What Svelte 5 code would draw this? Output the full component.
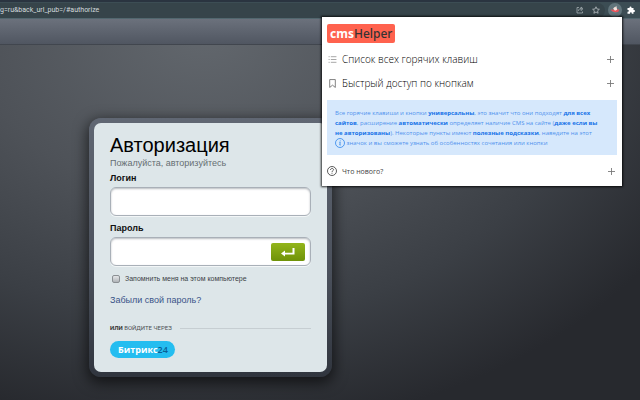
<script lang="ts">
  let login = $state('');
  let password = $state('');
  let remember = $state(false);
</script>

<div class="browser">
  <div class="toolbar">
    <div class="address">
      <span class="url">g=ru&amp;back_url_pub=/#authorize</span>
      <button class="tool" aria-label="Поделиться">
        <svg viewBox="0 0 16 16" fill="none" stroke="#aab2b6" stroke-width="1.500">
          <path d="M6 3H2v11h11v-3M5 10c0-4 3-5 6-5M10 2l4 3.500-4 3.500z" />
        </svg>
      </button>
      <button class="tool" aria-label="Добавить в закладки">
        <svg viewBox="0 0 16 16" fill="none" stroke="#b7bec2" stroke-width="1.600">
          <path d="M8 1.500l2 4.500 4.800.5-3.600 3.200 1 4.800L8 12l-4.200 2.500 1-4.800L1.200 6.500 6 6z" />
        </svg>
      </button>
    </div>
    <button class="tool round" aria-label="cmsHelper">
      <svg viewBox="0 0 16 16">
        <path d="M2 9c3 4 9 5 12 0l-3 .5H4z" fill="#2f9aa3" />
        <path d="M1 7l5 .5L9 6l6 1.500-2 3.500-5 1-5-2z" fill="#e8545c" />
        <path d="M5 6l2-3 1 1 2-3 1.500 6.500L8 9z" fill="#f6e3dd" />
      </svg>
    </button>
    <button class="tool" aria-label="Расширения">
      <svg viewBox="0 0 16 16" fill="#fff">
        <path d="M1 4h4V3a2 2 0 0 1 4 0v1h4v4h1a2 2 0 0 1 0 4h-1v3.500H9.500V14a1.700 1.700 0 0 0-3.400 0v1.500H1v-4h1a1.800 1.800 0 0 0 0-3.600H1z" />
      </svg>
    </button>
  </div>

  <aside class="popup">
    <div class="logo"><b>cms</b>Helper</div>

    <button class="item">
      <svg viewBox="0 0 16 16" fill="none" stroke="#888" stroke-width="1.300">
        <path d="M5 3h10M5 8h10M5 13h10M1 3h2M1 8h2M1 13h2" />
      </svg>
      <span>Список всех горячих клавиш</span>
      <svg class="plus" viewBox="0 0 8 8" fill="none" stroke="#777"><path d="M4 0v8M0 4h8" /></svg>
    </button>
    <button class="item">
      <svg viewBox="0 0 16 16" fill="none" stroke="#555" stroke-width="1.300">
        <path d="M3 1h10v14l-5-4-5 4z" />
      </svg>
      <span>Быстрый доступ по кнопкам</span>
      <svg class="plus" viewBox="0 0 8 8" fill="none" stroke="#777"><path d="M4 0v8M0 4h8" /></svg>
    </button>

    <p class="note">
      Все горячие клавиши и кнопки <b>универсальны</b>, это значит что они подходят <b>для всех</b><br />
      <b>сайтов</b>, расширение <b>автоматически</b> определяет наличие CMS на сайте (<b>даже если вы</b><br />
      <b>не авторизованы</b>). Некоторые пункты имеют <b>полезные подсказки</b>, наведите на этот<br />
      <svg viewBox="0 0 20 20" fill="none" stroke="#2f86ec" stroke-width="1.600">
        <circle cx="10" cy="10" r="9" />
        <path d="M8.500 8.500h2l-1 5.500h2M10.700 5v1.500" />
      </svg>
      значок и вы сможете узнать об особенностях сочетания или кнопки
    </p>

    <button class="item small">
      <svg viewBox="0 0 20 20" fill="none" stroke="#333" stroke-width="1.600">
        <circle cx="10" cy="10" r="9" />
        <path d="M7 8c0-4 6-4 6-.5 0 2-3 2-3 4.500M10 13.500v2" />
      </svg>
      <span>Что нового?</span>
      <svg class="plus" viewBox="0 0 8 8" fill="none" stroke="#777"><path d="M4 0v8M0 4h8" /></svg>
    </button>
  </aside>

  <div class="band"></div>

  <main>
    <form class="card" onsubmit={(e) => e.preventDefault()}>
      <h1>Авторизация</h1>
      <p class="sub">Пожалуйста, авторизуйтесь</p>

      <label class="name" for="login">Логин</label>
      <div class="field"><input id="login" type="text" bind:value={login} /></div>

      <label class="name" for="password">Пароль</label>
      <div class="field">
        <input id="password" type="password" bind:value={password} />
        <button class="enter" type="submit" aria-label="Войти">
          <svg viewBox="0 0 14 10" fill="#fff">
            <path d="M0 6.500L4 3.500v2.200H11.500V1h2v6.500H4V9.500z" />
          </svg>
        </button>
      </div>

      <label class="remember">
        <input type="checkbox" bind:checked={remember} />
        Запомнить меня на этом компьютере
      </label>

      <a class="forgot" href="#forgot">Забыли свой пароль?</a>

      <div class="or"><span><b>или</b> войдите через</span></div>
      <button class="b24" type="button">Битрикс<span>24</span></button>
    </form>
  </main>
</div>

<style>
  :global(body) { margin: 0; }
  .browser {
    position: relative;
    display: flex;
    flex-direction: column;
    min-height: 100vh;
    font-family: "Liberation Sans", Arial, sans-serif;
    background: radial-gradient(ellipse 85% 100% at 32% 8%, #62676d, #4e5258 42%, #3b3f45 72%, #27292e 100%);
  }
  button {
    border: 0;
    padding: 0;
    background: none;
    font-family: inherit;
    cursor: pointer;
  }
  svg { display: block; }

  .toolbar {
    display: flex;
    align-items: center;
    gap: 3px;
    height: 16px;
    padding-right: 3px;
    border-top: 2px solid #2a3440;
    border-bottom: 1px solid #52676f;
    background: #3c4d54;
  }
  .address {
    display: flex;
    flex: 1;
    align-items: center;
    gap: 4px;
    height: 15px;
    padding-right: 3px;
    border-radius: 0 8px 8px 0;
    background: #36444a;
  }
  .url {
    flex: 1;
    font: 7px/12px Roboto, sans-serif;
    color: #d3dadd;
  }
  .tool {
    display: grid;
    place-items: center;
    width: 12px;
    height: 14px;
  }
  .tool svg { width: 8px; height: 8px; }
  .tool.round {
    width: 14px;
    border-radius: 50%;
    background: #61747b;
  }
  .tool.round svg { width: 10px; height: 10px; }

  .popup {
    position: absolute;
    top: 17px;
    right: 18px;
    box-sizing: border-box;
    width: 300px;
    padding: 7px 5px 3px;
    background: #fff;
    box-shadow: 0 0 2px 1px rgba(0, 0, 0, 0.8);
    font-family: "Open Sans", sans-serif;
  }
  .logo {
    width: fit-content;
    margin-bottom: 4px;
    padding: 0 3px;
    border-radius: 2px;
    background: #ff624e;
    color: #333;
    font: 500 12px/19px "Noto Sans", sans-serif;
  }
  .logo b { color: #fff; }
  .item {
    display: flex;
    align-items: center;
    gap: 5px;
    width: 100%;
    height: 24px;
    padding: 0 3px 0 1px;
    font-size: 10px;
    font-weight: 300;
    color: #000;
    text-align: left;
  }
  .item svg { width: 9px; height: 9px; }
  .item span { flex: 1; }
  .item .plus { width: 7px; height: 7px; }
  .item.small {
    padding: 0 2px 0 0;
    font-size: 7px;
    font-weight: 400;
    color: #444;
  }
  .item.small svg { width: 10px; height: 10px; }
  .item.small .plus { width: 7px; height: 7px; }
  .note {
    margin: 5px 0 4px;
    padding: 8px 8px 7px;
    background: #d6e8fc;
    color: #4f92ee;
    font-size: 6px;
    line-height: 10px;
  }
  .note b { color: #1572e8; }
  .note svg {
    display: inline-block;
    width: 10px;
    height: 10px;
    vertical-align: middle;
  }

  .band {
    height: 25px;
    border-bottom: 1px solid #41464e;
    background: linear-gradient(#6b717c, #505661);
  }
  main { padding: 73px 89px 23px; }
  .card {
    display: flex;
    flex-direction: column;
    box-sizing: border-box;
    width: 243px;
    padding: 11px 16px 14px;
    border: 5px solid transparent;
    border-radius: 12px;
    background:
      linear-gradient(#dde6e9, #dde6e9) padding-box,
      linear-gradient(#606773, #4a505b 60%, #30353e) border-box;
    box-shadow: 0 4px 14px 2px rgba(0, 0, 0, 0.6);
  }
  h1 {
    margin: 0;
    font-size: 20px;
    font-weight: 400;
    line-height: 23px;
    color: #000;
  }
  .sub {
    margin: 0 0 3px;
    font-size: 9px;
    line-height: 12px;
    color: #666e72;
  }
  .name {
    margin-bottom: 3px;
    font-size: 9px;
    font-weight: 700;
    line-height: 12px;
    color: #111;
  }
  .field {
    display: flex;
    align-items: center;
    box-sizing: border-box;
    height: 29px;
    margin-bottom: 6px;
    padding: 0 5px;
    border: 1px solid #a9b0b8;
    border-radius: 6px;
    background: #fff;
    box-shadow: inset 0 1px 2px rgba(80, 90, 100, 0.4), 0 1px 0 #f2f6f7;
  }
  .field input {
    flex: 1;
    min-width: 0;
    border: 0;
    outline: 0;
    background: none;
    font-size: 12px;
  }
  .enter {
    display: grid;
    place-items: center;
    width: 34px;
    height: 18px;
    border-radius: 2px;
    background: linear-gradient(#93b51b, #6f9208);
  }
  .enter svg { width: 14px; height: 10px; }
  .remember {
    display: flex;
    align-items: center;
    gap: 5px;
    margin: 1px 0 9px 2px;
    font-size: 7px;
    line-height: 12px;
    color: #3c4246;
  }
  .remember input {
    appearance: none;
    width: 8px;
    height: 8px;
    margin: 0;
    border: 1px solid #8b9094;
    border-radius: 2px;
    background: linear-gradient(#e4e6e8, #b0b4b8);
  }
  .remember input:checked { background: #6f9208; }
  .forgot {
    align-self: flex-start;
    margin-bottom: 16px;
    font-size: 9px;
    line-height: 12px;
    color: #3a5388;
    text-decoration: none;
  }
  .or {
    display: flex;
    align-items: center;
    gap: 8px;
    margin-bottom: 7px;
    font: 6px/12px Roboto, sans-serif;
    text-transform: uppercase;
    color: #4b5054;
  }
  .or b { color: #333; }
  .or::after {
    content: '';
    flex: 1;
    height: 1px;
    background: #c6ced2;
  }
  .b24 {
    align-self: flex-start;
    height: 17px;
    padding: 0 7px 0 8px;
    border-radius: 9px;
    background: #24bdf0;
    color: #fff;
    font: 700 9px/17px "Open Sans", sans-serif;
  }
  .b24 span {
    font-weight: 600;
    color: #0a5f96;
  }
</style>
